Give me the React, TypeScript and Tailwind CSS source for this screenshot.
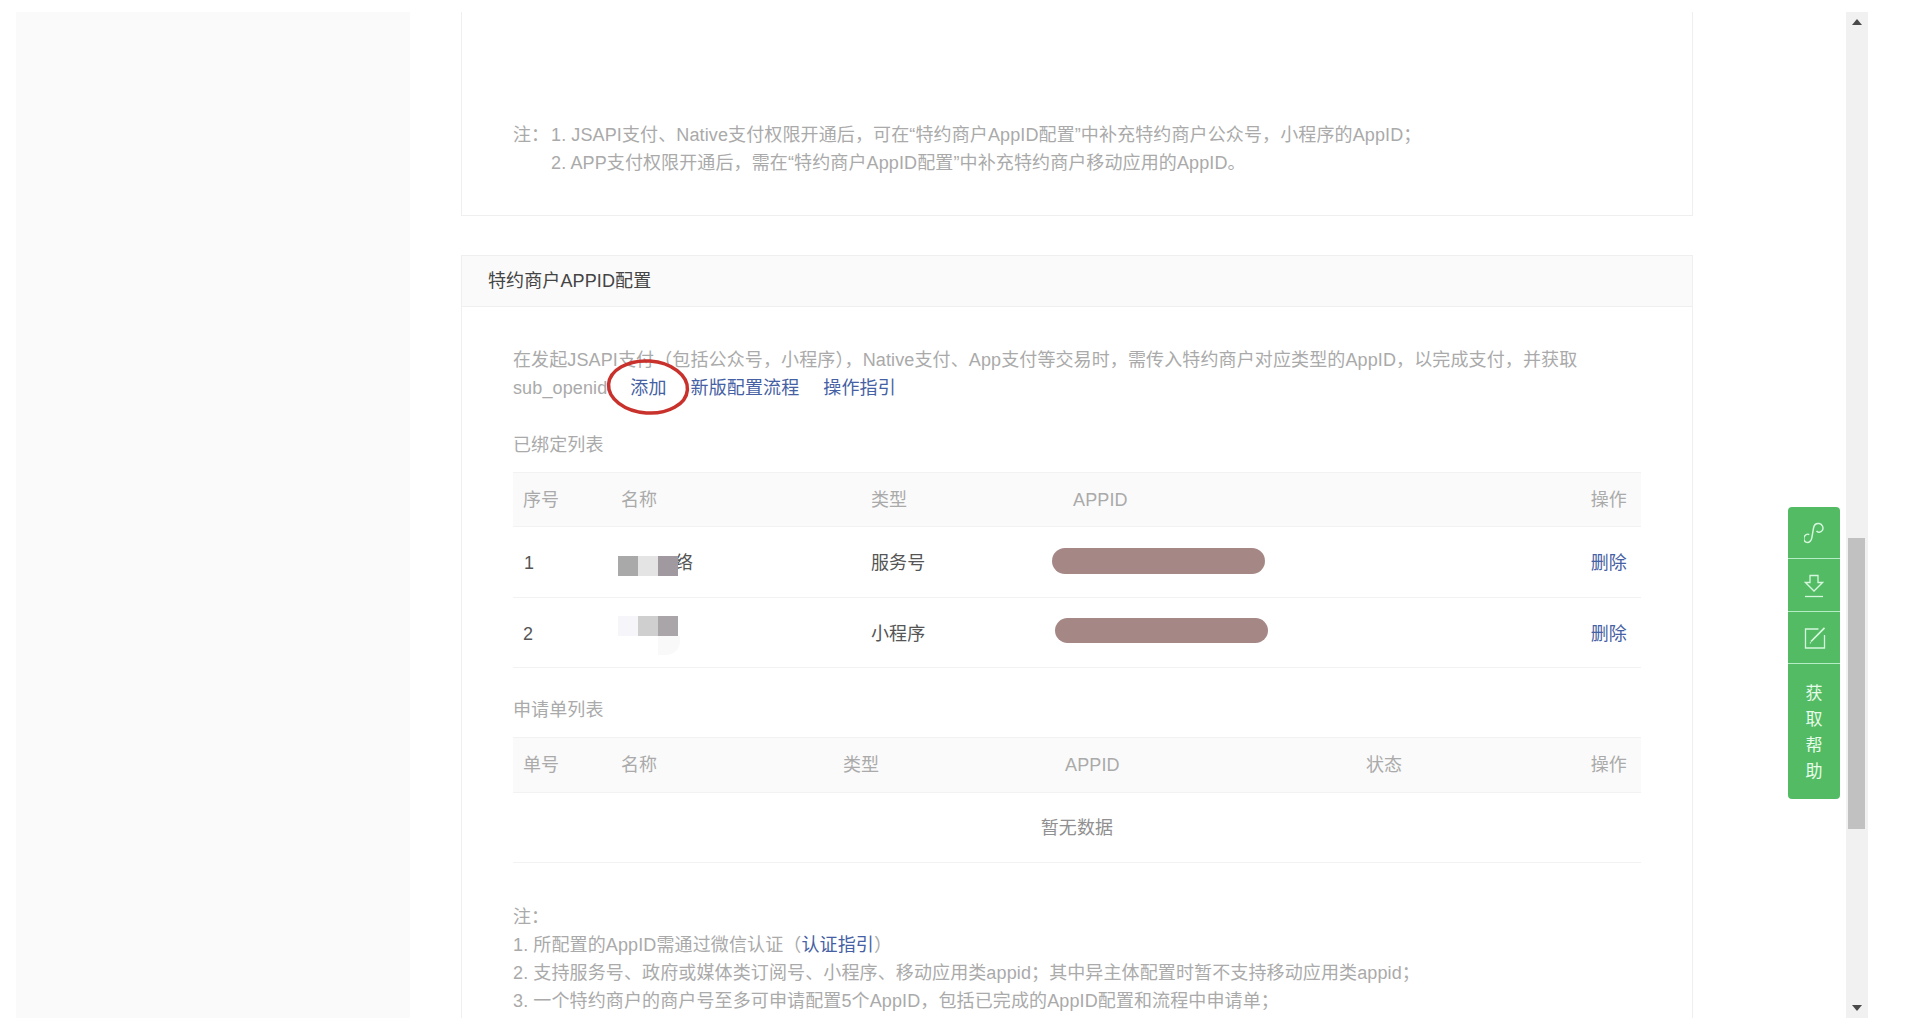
import React from 'react';

const FONT = "[font-family:'Liberation_Sans','Noto_Sans_CJK_SC',sans-serif]";

function Link2({ children }: { children: React.ReactNode }) {
  return <a className="text-[#4560a3]">{children}</a>;
}

function Blocks({ colors, className }: { colors: string[]; className: string }) {
  return (
    <div className={`absolute flex h-5 ${className}`}>
      {colors.map((c, i) => (
        <div key={i} className="w-5" style={{ background: c }} />
      ))}
    </div>
  );
}

function BoundTable() {
  const grid = 'grid grid-cols-[108px_250px_202px_1fr_80px] items-center';
  return (
    <div className="mt-[13px] relative">
      <div className={`${grid} h-[55px] bg-[#fafafa] border-y border-[#f2f2f2] text-[#aaa]`}>
        <div className="pl-[10px]">序号</div>
        <div>名称</div>
        <div>类型</div>
        <div>APPID</div>
        <div className="pr-[14px] text-right">操作</div>
      </div>
      <div className={`${grid} h-[71px] border-b border-[#f2f2f2] pt-[2px] text-[#555]`}>
        <div className="pl-[11px]">1</div>
        <div className="pl-[54px]">络</div>
        <div>服务号</div>
        <div />
        <div className="pr-[14px] text-right"><Link2>删除</Link2></div>
      </div>
      <div className={`${grid} h-[70px] border-b border-[#f2f2f2] pt-[2px] text-[#555]`}>
        <div className="pl-[10px]">2</div>
        <div />
        <div>小程序</div>
        <div />
        <div className="pr-[14px] text-right"><Link2>删除</Link2></div>
      </div>
      {/* redaction marks */}
      <Blocks colors={['#a9a9a9', '#e4e4e4', '#a09aa0']} className="left-[105px] top-[84px]" />
      <Blocks colors={['#f6f6fa', '#cfcfcf', '#aaa5a8']} className="left-[105px] top-[144px]" />
      <div className="absolute left-[145px] top-[164px] h-[19px] w-[22px] rounded-br-[14px] bg-[#f9f9f9]" />
      <div className="absolute left-[539px] top-[76px] h-[26px] w-[213px] rounded-[13px] bg-[#a58886]" />
      <div className="absolute left-[542px] top-[146px] h-[25px] w-[213px] rounded-[13px] bg-[#a58886]" />
    </div>
  );
}

function RequestTable() {
  const grid = 'grid grid-cols-[108px_222px_222px_301px_1fr] items-center';
  return (
    <div className="mt-[13px]">
      <div className={`${grid} h-[56px] bg-[#fafafa] border-y border-[#f2f2f2] text-[#aaa]`}>
        <div className="pl-[10px]">单号</div>
        <div>名称</div>
        <div>类型</div>
        <div>APPID</div>
        <div className="flex justify-between pr-[14px]">
          <span>状态</span>
          <span>操作</span>
        </div>
      </div>
      <div className="flex h-[70px] items-center justify-center border-b border-[#f2f2f2] text-[#909090]">
        暂无数据
      </div>
    </div>
  );
}

function HelpPanel() {
  return (
    <div className="absolute left-[1788px] top-[507px] flex h-[292px] w-[52px] flex-col rounded-[4px] bg-[#53bb64] text-[#e6fbea]">
      <div className="flex h-[52px] items-center justify-center border-b border-[#b5eec5] pt-[2px]">
        <svg width="21" height="23" viewBox="0 0 20 22" fill="none" stroke="#d5f7dd" strokeWidth="1.4">
          <path d="M12 8.500c1 2 4 1.500 5.500-.5 1.500-2.500 0-6-3-6.500-3-.5-5 1.500-5.500 4.500l-1.500 9c-.5 3-2.500 5-5 4.500-2.500-.5-3.500-3.500-2-6 1-1.500 3-2.500 4.500-1.500" />
        </svg>
      </div>
      <div className="flex h-[53px] items-center justify-center border-b border-[#b5eec5] pt-[2px]">
        <svg width="20" height="24" viewBox="0 0 20 24" fill="none" stroke="#d5f7dd" strokeWidth="1.3">
          <path d="M6 1.500h8v7h4.500L10 17 1.500 8.500H6z" />
          <path d="M1 22.500h18" />
        </svg>
      </div>
      <div className="flex h-[52px] items-center justify-center border-b border-[#b5eec5] pl-[1px]">
        <svg width="22" height="22" viewBox="0 0 22 22" fill="none" stroke="#d5f7dd" strokeWidth="1.3">
          <path d="M14.500 2H1.500v19h19V8" />
          <path d="M7 14.500 20.500.8" strokeWidth="1.700" />
          <path d="M6 15.500l.8.800" />
        </svg>
      </div>
      <div className="flex flex-1 flex-col items-center justify-center pt-[3px] text-[17px] leading-[26px]">
        <span>获</span>
        <span>取</span>
        <span>帮</span>
        <span>助</span>
      </div>
    </div>
  );
}

function Scrollbar() {
  return (
    <div className="relative ml-[153px] h-full w-[22px] bg-[#f1f1f1]">
      <div className="absolute left-[6px] top-[7px] h-0 w-0 border-x-[5px] border-b-[6px] border-x-transparent border-b-[#4a4a4a]" />
      <div className="absolute left-[2px] top-[526px] h-[291px] w-[17px] bg-[#c1c1c1]" />
      <div className="absolute bottom-[7px] left-[6px] h-0 w-0 border-x-[5px] border-t-[6px] border-x-transparent border-t-[#4a4a4a]" />
    </div>
  );
}

export default function App() {
  return (
    <div className={`relative h-[1034px] w-[1912px] overflow-hidden bg-white pl-4 pt-3 text-[18px] leading-[28px] tracking-[0.12px] ${FONT}`}>
      <div className="flex h-[1006px]">
        <aside className="w-[394px] bg-[#fafafa]" />

        <main className="ml-[51px] w-[1232px] overflow-hidden">
          <section className="h-[204px] border-x border-b border-[#efefef] pl-[51px] pt-[109px] text-[#aaa]">
            <div className="flex">
              <span className="w-[38px] whitespace-nowrap">注：</span>
              <div>
                <p>1. JSAPI支付、Native支付权限开通后，可在“特约商户AppID配置”中补充特约商户公众号，小程序的AppID；</p>
                <p>2. APP支付权限开通后，需在“特约商户AppID配置”中补充特约商户移动应用的AppID。</p>
              </div>
            </div>
          </section>

          <section className="mt-[39px] h-[770px] border-x border-t border-[#efefef]">
            <h3 className="flex h-[51px] items-center border-b border-[#efefef] bg-[#fafafa] pl-[26px] font-normal text-[#444]">
              特约商户APPID配置
            </h3>
            <div className="px-[51px] pt-[39px] text-[#aaa]">
              <p className="relative whitespace-nowrap">
                在发起JSAPI支付（包括公众号，小程序），Native支付、App支付等交易时，需传入特约商户对应类型的AppID，以完成支付，并获取
                <br />
                sub_openid
                <span className="ml-[23px]"><Link2>添加</Link2></span>
                <span className="ml-6"><Link2>新版配置流程</Link2></span>
                <span className="ml-6"><Link2>操作指引</Link2></span>
                <svg className="absolute left-[93px] top-[11px]" width="84" height="60" viewBox="0 0 84 60" fill="none">
                  <ellipse cx="42" cy="30" rx="39.500" ry="26" stroke="#c9322c" strokeWidth="3.500" transform="rotate(4 42 30)" />
                </svg>
              </p>

              <p className="mt-[29px]">已绑定列表</p>
              <BoundTable />

              <p className="mt-[28px]">申请单列表</p>
              <RequestTable />

              <div className="mt-[40px]">
                <p>注：</p>
                <p>1. 所配置的AppID需通过微信认证（<Link2>认证指引</Link2>）</p>
                <p>2. 支持服务号、政府或媒体类订阅号、小程序、移动应用类appid；其中异主体配置时暂不支持移动应用类appid；</p>
                <p>3. 一个特约商户的商户号至多可申请配置5个AppID，包括已完成的AppID配置和流程中申请单；</p>
              </div>
            </div>
          </section>
        </main>

        <Scrollbar />
      </div>
      <HelpPanel />
    </div>
  );
}
